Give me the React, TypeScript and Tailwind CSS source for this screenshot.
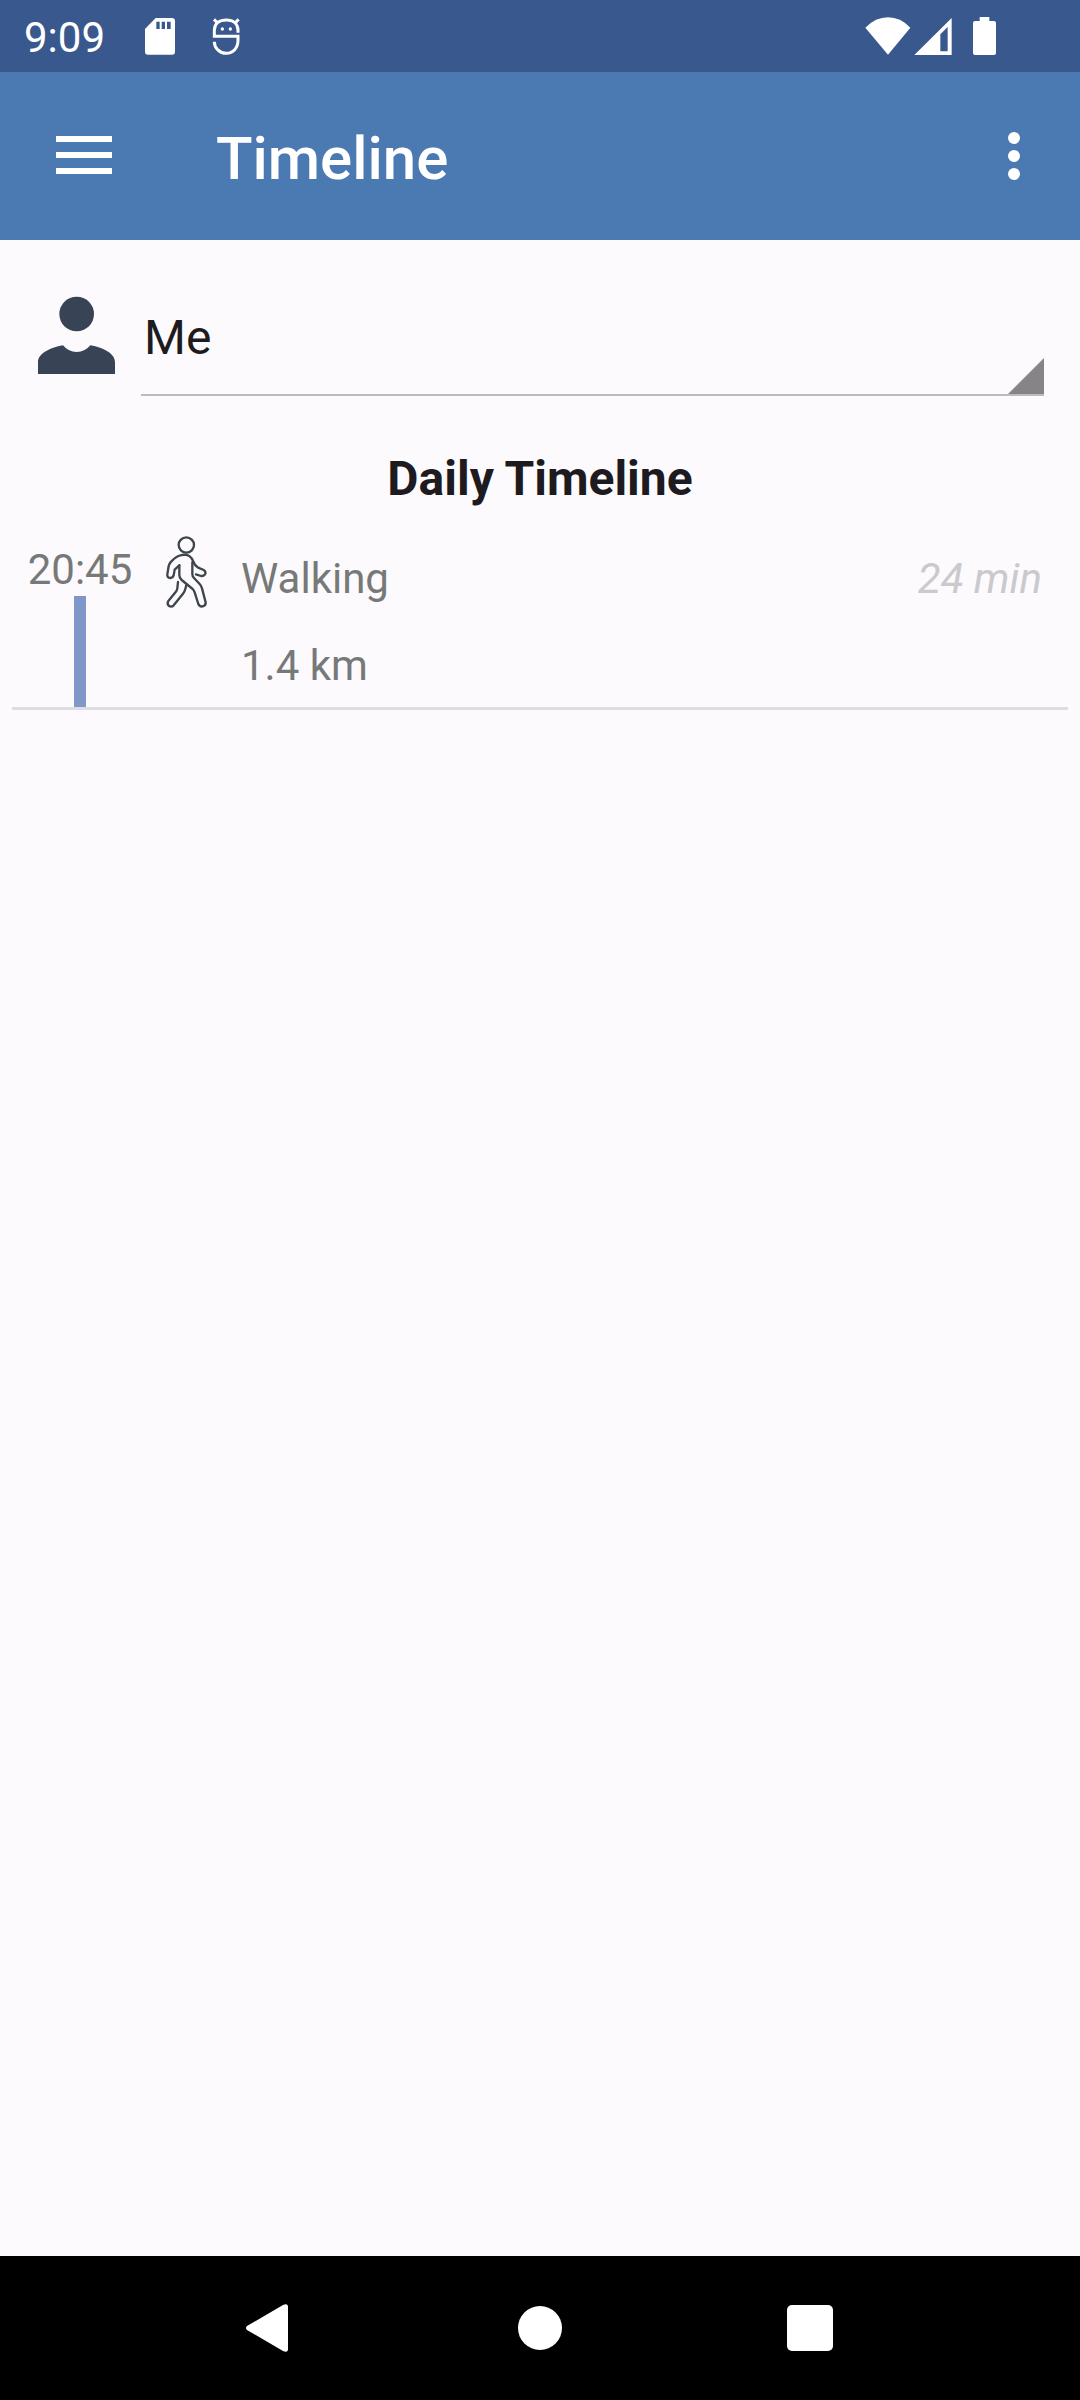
import React, { useState } from 'react';

interface TimelineEntry {
  id: number;
  time: string;
  activity: string;
  distance: string;
  duration: string;
}

const entries: TimelineEntry[] = [
  { id: 1, time: '20:45', activity: 'Walking', distance: '1.4 km', duration: '24 min' },
];

const StatusBar: React.FC = () => (
  <div className="flex h-[72px] items-center justify-between bg-[#39598e] pl-6 pr-[84px] text-white">
    <div className="flex items-center">
      <span className="pt-1 text-[42px] leading-[48px]">9:09</span>
      {/* SD card */}
      <svg className="ml-[39px] h-[38px] w-[32px]" viewBox="0 0 96 114" fill="currentColor">
        <path
          fillRule="evenodd"
          d="M35 3H84Q93 3 93 12V104Q93 113 84 113H12Q3 113 3 104V36ZM37 14V36H47V14ZM53 14V36H63V14ZM69 14V36H80V14Z"
        />
      </svg>
      {/* debug mascot */}
      <svg
        className="ml-[36px] h-[38px] w-[28px]"
        viewBox="0 0 84 114"
        fill="none"
        stroke="currentColor"
        strokeWidth="9"
      >
        <path d="M78 47V40C78 19 63 9 43 9S7 19 7 40V58H78V70C78 93 63 109 43 109S7 93 7 74" />
        <path d="M6 7L17 18M80 7L69 18" strokeWidth="9" />
        <circle cx="31" cy="36" r="5" fill="currentColor" stroke="none" />
        <circle cx="55" cy="36" r="5" fill="currentColor" stroke="none" />
      </svg>
    </div>
    <div className="flex items-center">
      {/* wifi */}
      <svg className="h-[38px] w-[46px]" viewBox="0 0 138 114" fill="currentColor">
        <path d="M1 32Q32 1 69 1T136 32L69 113Z" />
      </svg>
      {/* mobile signal */}
      <svg className="ml-[3px] h-[38px] w-[38px]" viewBox="0 0 114 114" fill="currentColor">
        <path fillRule="evenodd" d="M113 3V114H1ZM101 30L79 52V103H101Z" />
      </svg>
      {/* battery */}
      <svg className="ml-[21px] h-[38px] w-[23px]" viewBox="0 0 69 114" fill="currentColor">
        <path d="M20 0H49V12H63Q69 12 69 18V108Q69 114 63 114H6Q0 114 0 108V18Q0 12 6 12H20Z" />
      </svg>
    </div>
  </div>
);

const AppBar: React.FC = () => (
  <header className="flex h-[168px] items-center bg-[#4b79b1] pl-14 pr-12 text-white">
    <button aria-label="Open menu">
      <svg className="h-[40px] w-[56px]" viewBox="0 0 56 40" fill="currentColor">
        <path d="M0 0H56V6H0ZM0 16H56V22H0ZM0 32H56V38H0Z" />
      </svg>
    </button>
    <h1 className="ml-[104px] flex-1 pt-1.5 text-[60px] font-medium leading-[72px]">Timeline</h1>
    <button aria-label="More options">
      <svg className="h-[48px] w-[36px]" viewBox="0 0 36 48" fill="currentColor">
        <circle cx="18" cy="6" r="6" />
        <circle cx="18" cy="24" r="6" />
        <circle cx="18" cy="42" r="6" />
      </svg>
    </button>
  </header>
);

const WalkIcon: React.FC = () => (
  <svg
    className="ml-0.5 h-[90px] w-[75px] shrink-0"
    viewBox="0 0 225 270"
    fill="none"
    stroke="#3d454d"
    strokeWidth="7"
    strokeLinecap="round"
    strokeLinejoin="round"
  >
    <circle cx="109" cy="60" r="23" />
    <path d="M88 121L74 134L71 151Q69 159 61 159Q51 158 52 148L56 123Q58 115 64 109Q83 89 104 89Q122 90 129 108Q134 121 143 127L161 135Q168 139 166 146Q162 154 153 153L138 148" />
    <path d="M88 121V151Q88 159 95 165L128 192Q132 196 134 202L145 237Q149 246 158 244Q168 242 167 232L156 190Q154 182 149 177L132 159Q127 154 127 147V112" />
    <path d="M84 171L82 190Q81 196 77 201L55 228Q50 237 57 243Q65 247 71 241L99 206Q104 200 106 192L109 180" />
  </svg>
);

const TimelineRow: React.FC<{ entry: TimelineEntry }> = ({ entry }) => (
  <li className="mx-3 flex items-stretch border-b-[3px] border-[#dedde0] pr-[26px] text-[42px] leading-[48px] text-[#767978]">
    <div className="flex w-[136px] flex-col items-center pt-[21px]">
      <time>{entry.time}</time>
      <div className="mt-0.5 w-3 flex-1 bg-[#8097c9]" />
    </div>
    <WalkIcon />
    <div className="ml-4 flex flex-1 flex-col gap-[39px] pt-[30px] pb-[17px]">
      <div className="flex justify-between">
        <span>{entry.activity}</span>
        <span className="italic text-[#cbc9cd]">{entry.duration}</span>
      </div>
      <p>{entry.distance}</p>
    </div>
  </li>
);

const NavBar: React.FC = () => (
  <nav className="flex h-[144px] items-center justify-center bg-black text-white">
    <button aria-label="Back" className="flex w-1/4 justify-center">
      <svg className="h-[60px] w-[60px]" viewBox="0 0 60 60" fill="currentColor">
        <path d="M7 28L43 7Q48 5 48 9V51Q48 55 43 53L7 32Q5 30 7 28Z" />
      </svg>
    </button>
    <button aria-label="Home" className="flex w-1/4 justify-center">
      <span className="h-11 w-11 rounded-full bg-white" />
    </button>
    <button aria-label="Recent apps" className="flex w-1/4 justify-center">
      <span className="h-[46px] w-[46px] rounded-[5px] bg-white" />
    </button>
  </nav>
);

const App: React.FC = () => {
  const [person, setPerson] = useState('me');

  return (
    <div className="flex min-h-screen flex-col bg-[#fcfafd] font-[Roboto,sans-serif]">
      <StatusBar />
      <AppBar />
      <main className="flex-1 pt-[42px]">
        <div className="flex items-start pl-[38px] pr-9">
          <label htmlFor="person" className="pt-[14px]">
            <svg
              role="img"
              aria-label="Person"
              className="h-[78px] w-[78px]"
              viewBox="0 0 234 234"
              fill="#384456"
            >
              <circle cx="116" cy="54" r="52" />
              <path d="M0 234V198C0 174 34 155 75 148Q91 168 116 168T157 148C198 155 231 174 231 198V234Z" />
            </svg>
          </label>
          <div className="relative ml-[25px] flex-1">
            <select
              id="person"
              value={person}
              onChange={(e) => setPerson(e.target.value)}
              className="block h-[114px] w-full appearance-none border-b-2 border-[#bdbbbf] pl-[3px] text-[48px] leading-[56px] text-[#1d1b20] outline-none"
            >
              <option value="me">Me</option>
            </select>
            <svg
              className="pointer-events-none absolute right-0 bottom-0.5 h-9 w-9"
              viewBox="0 0 36 36"
              fill="#868487"
            >
              <path d="M36 0V36H0Z" />
            </svg>
          </div>
        </div>
        <h2 className="mt-[55px] text-center text-[48px] font-bold leading-[56px] text-[#1d1b20]">
          Daily Timeline
        </h2>
        <ul className="mt-[18px]">
          {entries.map((entry) => (
            <TimelineRow key={entry.id} entry={entry} />
          ))}
        </ul>
      </main>
      <NavBar />
    </div>
  );
};

export default App;
